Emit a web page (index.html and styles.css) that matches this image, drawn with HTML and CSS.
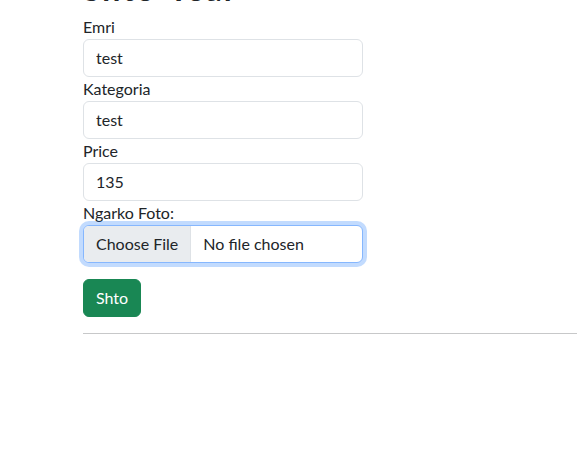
FILE: index.html
```html
<!DOCTYPE html>
<html lang="sq">
<head>
<meta charset="utf-8">
<title>Shto</title>
<link rel="stylesheet" href="styles.css">
</head>
<body>
<main class="page">
  <h2 class="title">Shto Teal</h2>
  <form class="form">
    <div class="group">
      <label class="label">Emri</label>
      <input class="control" type="text" value="test">
    </div>
    <div class="group">
      <label class="label">Kategoria</label>
      <input class="control" type="text" value="test">
    </div>
    <div class="group">
      <label class="label">Price</label>
      <input class="control" type="text" value="135">
    </div>
    <div class="group">
      <label class="label">Ngarko Foto:</label>
      <div class="control file focused">
        <span class="file-btn">Choose File</span>
        <span class="file-name">No file chosen</span>
      </div>
    </div>
    <button class="btn-success" type="button">Shto</button>
  </form>
  <hr class="rule">
</main>
</body>
</html>
```
FILE: styles.css
```css
* { box-sizing: border-box; }
html, body { margin: 0; padding: 0; background: #fff; }
body {
  font-family: "Lato", "Noto Sans", sans-serif;
  font-size: 16px;
  line-height: 1.5;
  color: #212529;
}
.page {
  padding-left: 83px;
  margin-top: -30px;
}
.title {
  margin: 0 0 6.6px 0;
  font-size: 32px;
  line-height: 1.2;
  font-weight: 700;
  letter-spacing: 2px;
  word-spacing: 4px;
}
.form {
  width: 280px;
  display: flex;
  flex-direction: column;
  align-items: flex-start;
}
.group { width: 100%; display: flex; flex-direction: column; }
.label { display: block; height: 24px; }
.control {
  display: block;
  width: 100%;
  height: 38px;
  padding: 6px 12px;
  font: inherit;
  color: #212529;
  background: #fff;
  border: 1px solid #dee2e6;
  border-radius: 6px;
  outline: none;
}
.file {
  display: flex;
  align-items: stretch;
  padding: 0;
  overflow: hidden;
}
.file.focused {
  border-color: #86b7fe;
  box-shadow: 0 0 0 4px rgba(13, 110, 253, 0.25);
}
.file-btn {
  display: flex;
  align-items: center;
  padding: 0 12px;
  background: #e9ecef;
  border-right: 1px solid #dee2e6;
}
.file-name {
  display: flex;
  align-items: center;
  padding-left: 12px;
}
.btn-success {
  margin-top: 16px;
  height: 38px;
  padding: 6px 12px;
  font: inherit;
  color: #fff;
  background: #198754;
  border: 1px solid #198754;
  border-radius: 6px;
}
.rule {
  margin: 16px 0 0 0;
  border: 0;
  border-top: 1px solid rgba(33, 37, 41, 0.25);
}
```
